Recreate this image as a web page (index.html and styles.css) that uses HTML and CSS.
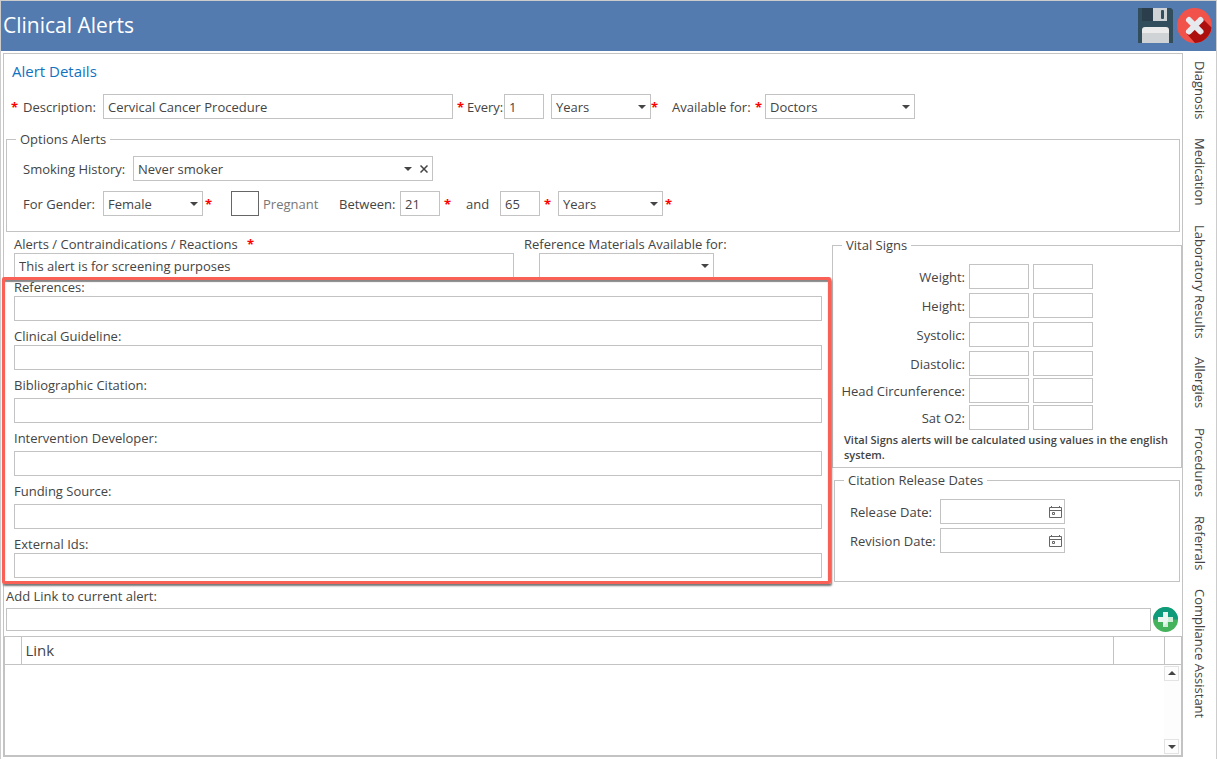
FILE: index.html
```html
<!DOCTYPE html>
<html lang="en">

<head>
  <meta charset="utf-8">
  <title>Clinical Alerts</title>
  <link rel="stylesheet" href="styles.css">
</head>

<body>
  <header class="titlebar">
    <h1>Clinical Alerts</h1>
    <button class="icon-button" type="button" aria-label="Save">
      <svg width="35" height="35" viewBox="0 0 35 35">
        <path fill="#324d5b" d="M0 0h33l2 2v33H0z" />
        <path fill="#2b3e4b" d="M4 0h11v13H4z" />
        <path fill="#d0d3d5" d="M15 0h14v13H15z" />
        <rect x="23" y="2" width="3" height="9" rx="1" fill="#324d5b" />
        <path fill="#ebebeb" d="M4 22q0-3 3-3h21q3 0 3 3v3H4z" />
        <path fill="#d0d3d5" d="M4 25h27v10H4z" />
      </svg>
    </button>
    <button class="icon-button" type="button" aria-label="Close">
      <svg width="35" height="35" viewBox="0 0 35 35">
        <circle cx="17.5" cy="17.5" r="17.5" fill="#f15249" />
        <path fill="#ad0e0e" d="M25 10l9.500 9.500A17.500 17.500 0 0 1 18 35L10 26z" />
        <path stroke="#e6e9ee" stroke-width="6" stroke-linecap="round" d="M12 12l11.500 11.500M23.500 12l-11.500 11.500" />
      </svg>
    </button>
  </header>

  <div class="content">
    <main class="panel">
      <h2>Alert Details</h2>

      <div class="row top-row">
        <span class="req">*</span>
        <label class="label-desc" for="description">Description:</label>
        <input class="box w350" id="description" type="text" value="Cervical Cancer Procedure">
        <span class="req req-wide">*</span>
        <label class="label-every" for="every">Every:</label>
        <input class="box w40" id="every" type="text" value="1">
        <span class="select w100 gap-left">
          <select id="everyUnit" aria-label="Every unit"><option>Years</option></select>
        </span>
        <span class="req">*</span>
        <label class="label-available" for="available">Available for:</label>
        <span class="req req-wide">*</span>
        <span class="select w150">
          <select id="available"><option>Doctors</option></select>
        </span>
      </div>

      <fieldset class="options">
        <legend>Options Alerts</legend>
        <div class="row">
          <label class="label-smoking" for="smoking">Smoking History:</label>
          <span class="select clearable w300">
            <select id="smoking"><option>Never smoker</option></select>
            <button class="clear" type="button" aria-label="Clear">
              <svg width="8" height="8" viewBox="0 0 8 8"><path stroke="#444" stroke-width="1.500" d="M.5 .5l7 7M7.500 .5l-7 7" /></svg>
            </button>
          </span>
        </div>
        <div class="row">
          <label class="label-gender" for="gender">For Gender:</label>
          <span class="select w100">
            <select id="gender"><option>Female</option></select>
          </span>
          <span class="req req-near">*</span>
          <input class="check" id="pregnant" type="checkbox" disabled>
          <label class="label-pregnant" for="pregnant">Pregnant</label>
          <label class="label-between" for="from">Between:</label>
          <input class="box w40" id="from" type="text" value="21">
          <span class="req req-mid">*</span>
          <label class="label-and" for="to">and</label>
          <input class="box w40" id="to" type="text" value="65">
          <span class="req req-mid">*</span>
          <span class="select w105">
            <select id="ageUnit" aria-label="Age unit"><option>Years</option></select>
          </span>
          <span class="req req-near">*</span>
        </div>
      </fieldset>

      <div class="columns">
        <div class="left">
          <div class="alert-row">
            <div class="alert-text">
              <label for="alert">Alerts / Contraindications / Reactions <span class="req req-label">*</span></label>
              <input class="box" id="alert" type="text" value="This alert is for screening purposes">
            </div>
            <div class="materials">
              <label for="materials">Reference Materials Available for:</label>
              <span class="select w175">
                <select id="materials"><option></option></select>
              </span>
            </div>
          </div>

          <div class="references">
            <div class="field">
              <label for="references">References:</label>
              <input class="box" id="references" type="text">
            </div>
            <div class="field">
              <label for="guideline">Clinical Guideline:</label>
              <input class="box" id="guideline" type="text">
            </div>
            <div class="field loose">
              <label for="citation">Bibliographic Citation:</label>
              <input class="box" id="citation" type="text">
            </div>
            <div class="field loose">
              <label for="developer">Intervention Developer:</label>
              <input class="box" id="developer" type="text">
            </div>
            <div class="field loose">
              <label for="funding">Funding Source:</label>
              <input class="box" id="funding" type="text">
            </div>
            <div class="field">
              <label for="external">External Ids:</label>
              <input class="box" id="external" type="text">
            </div>
          </div>
        </div>

        <div class="right">
          <fieldset class="vitals">
            <legend>Vital Signs</legend>
            <div class="vital">
              <label for="weight">Weight:</label>
              <input class="box" id="weight" type="text">
              <input class="box" type="text" aria-label="Weight to">
            </div>
            <div class="vital">
              <label for="height">Height:</label>
              <input class="box" id="height" type="text">
              <input class="box" type="text" aria-label="Height to">
            </div>
            <div class="vital">
              <label for="systolic">Systolic:</label>
              <input class="box" id="systolic" type="text">
              <input class="box" type="text" aria-label="Systolic to">
            </div>
            <div class="vital tight">
              <label for="diastolic">Diastolic:</label>
              <input class="box" id="diastolic" type="text">
              <input class="box" type="text" aria-label="Diastolic to">
            </div>
            <div class="vital tight">
              <label for="head">Head Circunference:</label>
              <input class="box" id="head" type="text">
              <input class="box" type="text" aria-label="Head Circunference to">
            </div>
            <div class="vital tight">
              <label for="sat">Sat O2:</label>
              <input class="box" id="sat" type="text">
              <input class="box" type="text" aria-label="Sat O2 to">
            </div>
            <p>Vital Signs alerts will be calculated using values in the english system.</p>
          </fieldset>

          <fieldset class="dates">
            <legend>Citation Release Dates</legend>
            <div class="date">
              <label for="release">Release Date:</label>
              <span class="date-box">
                <input id="release" type="text">
                <button type="button" aria-label="Pick release date">
                  <svg width="13" height="14" viewBox="0 0 13 14" fill="none" stroke="#666"><path d="M.5 2.500h12v10H.5zM.5 5.500h12M2.500 1v1M10.500 1v1M3.500 7.500h2v2h-2z" /></svg>
                </button>
              </span>
            </div>
            <div class="date">
              <label for="revision">Revision Date:</label>
              <span class="date-box">
                <input id="revision" type="text">
                <button type="button" aria-label="Pick revision date">
                  <svg width="13" height="14" viewBox="0 0 13 14" fill="none" stroke="#666"><path d="M.5 2.500h12v10H.5zM.5 5.500h12M2.500 1v1M10.500 1v1M3.500 7.500h2v2h-2z" /></svg>
                </button>
              </span>
            </div>
          </fieldset>
        </div>
      </div>

      <div class="add-link">
        <label for="link">Add Link to current alert:</label>
        <div class="add-row">
          <input class="box" id="link" type="text">
          <button class="icon-button" type="button" aria-label="Add link">
            <svg width="25" height="25" viewBox="0 0 25 25">
              <circle cx="12.500" cy="12.500" r="12.500" fill="#44b35c" />
              <path fill="#0e9b7c" d="M0 12.500a12.500 12.500 0 0 1 25 0z" />
              <path fill="#eaf6ef" d="M10 5h5v5h5v5h-5v5h-5v-5H5v-5h5z" />
              <path fill="#cfeed8" d="M15 10h5v5h-5v5h-5l5-6z" />
            </svg>
          </button>
        </div>
      </div>

      <div class="links">
        <table>
          <thead>
            <tr>
              <th class="col-mark"></th>
              <th>Link</th>
              <th class="col-action"></th>
              <th class="col-scroll"></th>
            </tr>
          </thead>
        </table>
        <div class="scrollbar">
          <button class="up" type="button" aria-label="Scroll up"></button>
          <button class="down" type="button" aria-label="Scroll down"></button>
        </div>
      </div>
    </main>

    <nav class="tabs">
      <button type="button">Diagnosis</button>
      <button type="button">Medication</button>
      <button type="button">Laboratory Results</button>
      <button type="button">Allergies</button>
      <button type="button">Procedures</button>
      <button type="button">Referrals</button>
      <button type="button">Compliance Assistant</button>
    </nav>
  </div>
</body>

</html>
```
FILE: styles.css
```css
* {
  box-sizing: border-box;
}

body {
  margin: 0;
  min-height: 100vh;
  display: flex;
  flex-direction: column;
  border: 1px solid #ccc;
  border-bottom: none;
  background-color: #fff;
  color: #444;
  font-family: "Open Sans", "Noto Sans", sans-serif;
  font-size: 13px;
  line-height: 18px;
}

input,
select,
button {
  font: inherit;
  color: inherit;
}

button {
  border: none;
  background: none;
  padding: 0;
  cursor: pointer;
}

label {
  white-space: nowrap;
}

svg {
  display: block;
}

/* title bar */
.titlebar {
  display: flex;
  align-items: center;
  gap: 4px;
  height: 50px;
  padding: 0 4px 2px 2px;
  background-color: #537bb0;
  color: #fff;
}

.titlebar h1 {
  flex: 1;
  margin: 0;
  font-size: 21px;
  font-weight: normal;
  line-height: 30px;
}

.content {
  flex: 1;
  display: flex;
  padding: 2px 0 2px 2px;
}

.panel {
  flex: 1;
  min-width: 0;
  display: flex;
  flex-direction: column;
  border: 1px solid #c3c3c3;
  border-bottom-width: 2px;
}

.panel h2 {
  margin: 6px 8px 12px;
  color: #1272c2;
  font-size: 15px;
  font-weight: normal;
  line-height: 22px;
}

/* form controls */
.row {
  display: flex;
  align-items: center;
}

.box {
  height: 25px;
  padding: 0 4px;
  border: 1px solid #c3c3c3;
  background-color: #fff;
  outline: none;
}

.select {
  position: relative;
  display: flex;
  height: 25px;
  border: 1px solid #c3c3c3;
}

.select select {
  flex: 1;
  appearance: none;
  padding: 0 4px;
  border: none;
  background: none;
  outline: none;
}

.select::after {
  content: "";
  position: absolute;
  top: 10px;
  right: 4px;
  border: 4px solid transparent;
  border-top-color: #444;
  border-bottom: none;
  pointer-events: none;
}

.clearable::after {
  right: 20px;
}

.clear {
  padding: 0 4px;
}

.w40 { width: 40px; }
.w100 { width: 100px; }
.w105 { width: 105px; }
.w150 { width: 150px; }
.w175 { width: 175px; }
.w300 { width: 300px; }
.w350 { width: 350px; }

.req {
  width: 12px;
  color: #f00;
  font-weight: bold;
}

.req-wide {
  padding-left: 4px;
  width: 14px;
}

.req-near {
  padding-left: 2px;
  width: 28px;
}

.req-mid {
  padding-left: 4px;
  width: 18px;
}

.req-label {
  padding-left: 6px;
}

.top-row {
  padding-left: 7px;
}

.label-desc { width: 80px; }
.label-every { width: 37px; }
.label-available { width: 79px; margin-left: 9px; }
.label-smoking { width: 110px; }
.label-gender { width: 80px; }
.label-pregnant { width: 76px; color: #777; }
.label-between { width: 61px; }
.label-and { width: 34px; margin-left: 8px; }
.gap-left { margin-left: 7px; }

.check {
  appearance: none;
  width: 28px;
  height: 25px;
  margin: 0 4px 0 0;
  border: 1px solid #666;
}

/* group boxes */
fieldset {
  min-width: 0;
  margin: 0;
  border: 1px solid #c3c3c3;
}

legend {
  margin-left: 9px;
  padding: 0 4px;
  line-height: 20px;
}

.options {
  display: flex;
  flex-direction: column;
  gap: 10px;
  margin: 10px 2px 3px;
  padding: 7px 0 15px;
}

.options .row {
  padding-left: 16px;
}

.columns {
  display: grid;
  grid-template-columns: 1fr 350px;
}

.alert-row {
  display: flex;
  gap: 10px;
  padding-left: 10px;
}

.alert-text {
  display: flex;
  flex-direction: column;
  width: 500px;
}

.materials .select {
  margin-left: 15px;
}

.references {
  position: relative;
  display: flex;
  flex-direction: column;
  gap: 6px;
  padding: 0 10px 6px;
}

/* red highlight drawn over the reference fields */
.references::after {
  content: "";
  position: absolute;
  inset: -1px 1px 0 -2px;
  border: 3px solid #f96156;
  border-radius: 2px;
  box-shadow: 1px 2px 2px #777, inset 0 2px 1px #888;
  pointer-events: none;
}

.field {
  display: flex;
  flex-direction: column;
}

.loose {
  gap: 4px;
}

.vitals {
  padding: 9px 0 5px;
}

.vital {
  display: grid;
  grid-template-columns: 132px 60px 60px;
  gap: 4px;
  align-items: center;
  margin-bottom: 4px;
}

.tight {
  margin-bottom: 2px;
}

.vital label {
  text-align: right;
}

.vitals p {
  margin: 0 11px;
  font-size: 11px;
  font-weight: 600;
  line-height: 15px;
}

.dates {
  display: flex;
  flex-direction: column;
  gap: 4px;
  margin: 2px 2px 0;
  padding: 9px 0 28px;
}

.date {
  display: grid;
  grid-template-columns: 90px 125px;
  align-items: center;
  padding-left: 15px;
}

.date-box {
  display: flex;
  align-items: center;
  height: 25px;
  padding-right: 2px;
  border: 1px solid #c3c3c3;
}

.date-box input {
  flex: 1;
  min-width: 0;
  border: none;
  outline: none;
}

/* links */
.add-link {
  padding: 3px 4px 4px 2px;
}

.add-row {
  display: flex;
  align-items: center;
  gap: 2px;
  margin-top: 2px;
}

.add-row .box {
  flex: 1;
  height: 23px;
}

.links {
  flex: 1;
  display: flex;
  flex-direction: column;
  border: 1px solid #c3c3c3;
  border-width: 1px 1px 0 1px;
}

.links table {
  width: 100%;
  table-layout: fixed;
  border-collapse: collapse;
}

.links th {
  height: 27px;
  padding: 0 4px;
  border-right: 1px solid #c3c3c3;
  border-bottom: 1px solid #c3c3c3;
  font-size: 15px;
  font-weight: normal;
  text-align: left;
}

.links th:last-child {
  border-right: none;
}

.links .col-mark { width: 16px; }
.links .col-action { width: 51px; }
.links .col-scroll { width: 17px; }

.scrollbar {
  flex: 1;
  align-self: flex-end;
  display: flex;
  flex-direction: column;
  justify-content: space-between;
  width: 17px;
  min-height: 40px;
  padding: 1px 2px 1px 0;
  background-color: #fdfdfd;
}

.scrollbar button {
  display: flex;
  align-items: center;
  justify-content: center;
  height: 15px;
  border: 1px solid #e3e3e3;
}

.scrollbar button::before {
  content: "";
  border: 4px solid transparent;
}

.scrollbar .up::before {
  border-top: none;
  border-bottom-color: #444;
}

.scrollbar .down::before {
  border-bottom: none;
  border-top-color: #444;
}

/* side tabs */
.tabs {
  display: flex;
  flex-direction: column;
  align-items: center;
  gap: 19px;
  width: 33px;
  padding-top: 8px;
}

.tabs button {
  writing-mode: vertical-rl;
  white-space: nowrap;
}
```
